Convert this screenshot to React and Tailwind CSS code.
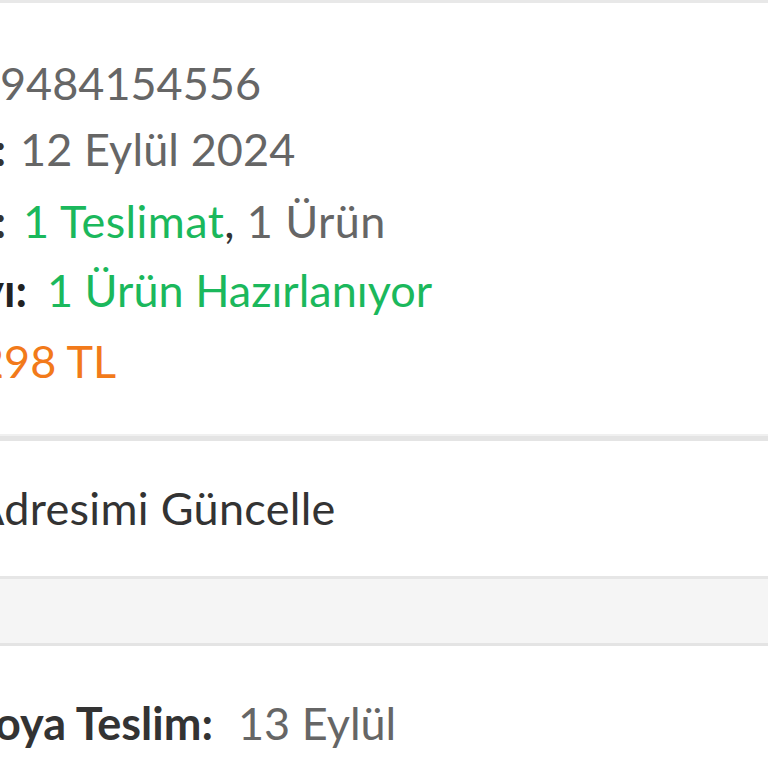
import React from 'react';

// Order detail card, cropped on the left as in the zoomed phone screenshot
export default function App() {
    return (
        <div className="w-full min-h-screen overflow-hidden bg-white font-['Lato','Noto_Sans',sans-serif] text-[45px]">
            {/* top edge of previous section */}
            <div className="h-[3px] bg-[#e8e8e8]" />

            {/* ORDER SUMMARY */}
            <div className="pt-[46px] pb-[40px] leading-[69px] whitespace-nowrap">
                <div className="flex items-baseline">
                    <span className="w-[400px] shrink-0 -ml-[412px] text-right font-bold text-[#333]">Sipariş No:</span>
                    <span className="ml-[12px] text-[#666]">9484154556</span>
                </div>
                <div className="flex items-baseline -mt-[3px] mb-[3px]">
                    <span className="w-[400px] shrink-0 -ml-[394px] text-right font-bold text-[#333]">Sipariş Tarihi:</span>
                    <span className="ml-[14px] tracking-[0.1px] text-[#666]">12 Eylül 2024</span>
                </div>
                <div className="flex items-baseline">
                    <span className="w-[400px] shrink-0 -ml-[394px] text-right font-bold text-[#333]">Sipariş Özeti:</span>
                    <span className="ml-[17px] tracking-[0.4px] text-[#666]">
                        <span className="text-[#1bb85c]">1 Teslimat</span>
                        <span className="text-[#333]">,</span> 1 Ürün
                    </span>
                </div>
                <div className="flex items-baseline">
                    <span className="w-[400px] shrink-0 -ml-[373px] text-right font-bold text-[#222]">Ürün Sayı:</span>
                    <span className="ml-[20px] text-[#1bb85c]">1 Ürün Hazırlanıyor</span>
                </div>
                <div className="flex items-baseline mt-[2px]">
                    <span className="w-[400px] shrink-0 -ml-[434px] text-right font-bold text-[#333]">Toplam:</span>
                    <span className="ml-[12px] text-[#f27a1a]">298 TL</span>
                </div>
            </div>

            {/* thick divider */}
            <div className="-mt-[2px] h-[2px] bg-[#f0f0f0]" />
            <div className="h-[5px] bg-[#e4e4e4]" />

            {/* ADDRESS ACTION */}
            <div className="flex h-[135px] items-center whitespace-nowrap">
                <span className="-ml-[26px] tracking-[0.3px] text-[#333]">Adresimi Güncelle</span>
            </div>

            <div className="h-[3px] bg-[#e6e6e6]" />
            <div className="h-[64px] bg-[#f5f5f5]" />
            <div className="h-[3px] bg-[#e4e4e4]" />

            {/* DELIVERY */}
            <div className="pt-[42px] leading-[70px] whitespace-nowrap">
                <div className="flex items-baseline">
                    <span className="w-[400px] shrink-0 -ml-[187px] text-right font-bold text-[#333]">Kargoya Teslim:</span>
                    <span className="ml-[25px] text-[#666]">13 Eylül</span>
                </div>
            </div>
        </div>
    );
}
